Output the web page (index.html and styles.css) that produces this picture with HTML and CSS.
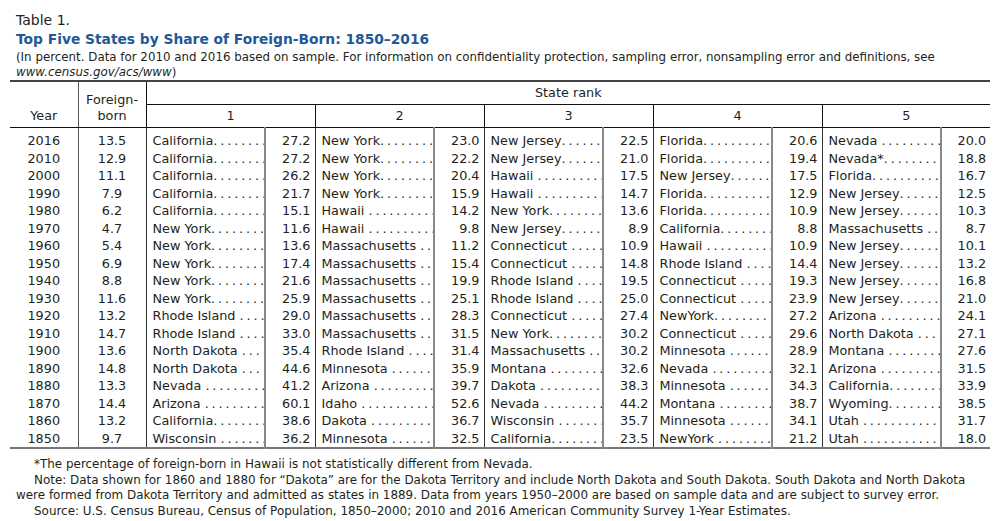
FILE: index.html
```html
<!DOCTYPE html>
<html>
<head>
<meta charset="utf-8">
<link rel="stylesheet" href="styles.css">
</head>
<body>
<div class="page">
  <div class="label">Table 1.</div>
  <h1 class="title">Top Five States by Share of Foreign-Born: 1850–2016</h1>
  <p class="sub">(In percent. Data for 2010 and 2016 based on sample. For information on confidentiality protection, sampling error, nonsampling error and definitions, see<br><i>www.census.gov/acs/www</i>)</p>
  <table class="tbl">
    <colgroup>
      <col class="c-year"><col class="c-fb">
      <col class="c-name"><col class="c-val">
      <col class="c-name"><col class="c-val">
      <col class="c-name"><col class="c-val">
      <col class="c-name"><col class="c-val">
      <col class="c-name"><col class="c-val5">
    </colgroup>
    <thead>
      <tr class="h1">
        <th rowspan="2" class="hy">Year</th>
        <th rowspan="2" class="hf">Foreign-<br>born</th>
        <th colspan="10" class="hr">State rank</th>
      </tr>
      <tr class="h2">
        <th colspan="2">1</th><th colspan="2">2</th><th colspan="2">3</th><th colspan="2">4</th><th colspan="2" class="last">5</th>
      </tr>
    </thead>
    <tbody>
      <tr class="first"><td>2016</td><td>13.5</td><td class="n">California</td><td class="v">27.2</td><td class="n">New York</td><td class="v">23.0</td><td class="n">New Jersey</td><td class="v">22.5</td><td class="n">Florida</td><td class="v">20.6</td><td class="n">Nevada </td><td class="v">20.0</td></tr>
      <tr><td>2010</td><td>12.9</td><td class="n">California</td><td class="v">27.2</td><td class="n">New York</td><td class="v">22.2</td><td class="n">New Jersey</td><td class="v">21.0</td><td class="n">Florida</td><td class="v">19.4</td><td class="n">Nevada*</td><td class="v">18.8</td></tr>
      <tr><td>2000</td><td>11.1</td><td class="n">California</td><td class="v">26.2</td><td class="n">New York</td><td class="v">20.4</td><td class="n">Hawaii </td><td class="v">17.5</td><td class="n">New Jersey</td><td class="v">17.5</td><td class="n">Florida</td><td class="v">16.7</td></tr>
      <tr><td>1990</td><td>7.9</td><td class="n">California</td><td class="v">21.7</td><td class="n">New York</td><td class="v">15.9</td><td class="n">Hawaii </td><td class="v">14.7</td><td class="n">Florida</td><td class="v">12.9</td><td class="n">New Jersey</td><td class="v">12.5</td></tr>
      <tr><td>1980</td><td>6.2</td><td class="n">California</td><td class="v">15.1</td><td class="n">Hawaii </td><td class="v">14.2</td><td class="n">New York</td><td class="v">13.6</td><td class="n">Florida</td><td class="v">10.9</td><td class="n">New Jersey</td><td class="v">10.3</td></tr>
      <tr><td>1970</td><td>4.7</td><td class="n">New York</td><td class="v">11.6</td><td class="n">Hawaii </td><td class="v">9.8</td><td class="n">New Jersey</td><td class="v">8.9</td><td class="n">California</td><td class="v">8.8</td><td class="n">Massachusetts </td><td class="v">8.7</td></tr>
      <tr><td>1960</td><td>5.4</td><td class="n">New York</td><td class="v">13.6</td><td class="n">Massachusetts </td><td class="v">11.2</td><td class="n">Connecticut </td><td class="v">10.9</td><td class="n">Hawaii </td><td class="v">10.9</td><td class="n">New Jersey</td><td class="v">10.1</td></tr>
      <tr><td>1950</td><td>6.9</td><td class="n">New York</td><td class="v">17.4</td><td class="n">Massachusetts </td><td class="v">15.4</td><td class="n">Connecticut </td><td class="v">14.8</td><td class="n">Rhode Island </td><td class="v">14.4</td><td class="n">New Jersey</td><td class="v">13.2</td></tr>
      <tr><td>1940</td><td>8.8</td><td class="n">New York</td><td class="v">21.6</td><td class="n">Massachusetts </td><td class="v">19.9</td><td class="n">Rhode Island </td><td class="v">19.5</td><td class="n">Connecticut </td><td class="v">19.3</td><td class="n">New Jersey</td><td class="v">16.8</td></tr>
      <tr><td>1930</td><td>11.6</td><td class="n">New York</td><td class="v">25.9</td><td class="n">Massachusetts </td><td class="v">25.1</td><td class="n">Rhode Island </td><td class="v">25.0</td><td class="n">Connecticut </td><td class="v">23.9</td><td class="n">New Jersey</td><td class="v">21.0</td></tr>
      <tr><td>1920</td><td>13.2</td><td class="n">Rhode Island </td><td class="v">29.0</td><td class="n">Massachusetts </td><td class="v">28.3</td><td class="n">Connecticut </td><td class="v">27.4</td><td class="n">NewYork</td><td class="v">27.2</td><td class="n">Arizona </td><td class="v">24.1</td></tr>
      <tr><td>1910</td><td>14.7</td><td class="n">Rhode Island </td><td class="v">33.0</td><td class="n">Massachusetts </td><td class="v">31.5</td><td class="n">New York</td><td class="v">30.2</td><td class="n">Connecticut </td><td class="v">29.6</td><td class="n">North Dakota </td><td class="v">27.1</td></tr>
      <tr><td>1900</td><td>13.6</td><td class="n">North Dakota </td><td class="v">35.4</td><td class="n">Rhode Island </td><td class="v">31.4</td><td class="n">Massachusetts </td><td class="v">30.2</td><td class="n">Minnesota </td><td class="v">28.9</td><td class="n">Montana </td><td class="v">27.6</td></tr>
      <tr><td>1890</td><td>14.8</td><td class="n">North Dakota </td><td class="v">44.6</td><td class="n">Minnesota </td><td class="v">35.9</td><td class="n">Montana </td><td class="v">32.6</td><td class="n">Nevada </td><td class="v">32.1</td><td class="n">Arizona </td><td class="v">31.5</td></tr>
      <tr><td>1880</td><td>13.3</td><td class="n">Nevada </td><td class="v">41.2</td><td class="n">Arizona </td><td class="v">39.7</td><td class="n">Dakota </td><td class="v">38.3</td><td class="n">Minnesota </td><td class="v">34.3</td><td class="n">California</td><td class="v">33.9</td></tr>
      <tr><td>1870</td><td>14.4</td><td class="n">Arizona </td><td class="v">60.1</td><td class="n">Idaho </td><td class="v">52.6</td><td class="n">Nevada </td><td class="v">44.2</td><td class="n">Montana </td><td class="v">38.7</td><td class="n">Wyoming</td><td class="v">38.5</td></tr>
      <tr><td>1860</td><td>13.2</td><td class="n">California</td><td class="v">38.6</td><td class="n">Dakota </td><td class="v">36.7</td><td class="n">Wisconsin </td><td class="v">35.7</td><td class="n">Minnesota </td><td class="v">34.1</td><td class="n">Utah </td><td class="v">31.7</td></tr>
      <tr class="lastrow"><td>1850</td><td>9.7</td><td class="n">Wisconsin </td><td class="v">36.2</td><td class="n">Minnesota </td><td class="v">32.5</td><td class="n">California</td><td class="v">23.5</td><td class="n">NewYork </td><td class="v">21.2</td><td class="n">Utah </td><td class="v">18.0</td></tr>
    </tbody>
  </table>
  <div class="notes">
    <p class="ind">*The percentage of foreign-born in Hawaii is not statistically different from Nevada.</p>
    <p class="ind">Note: Data shown for 1860 and 1880 for “Dakota” are for the Dakota Territory and include North Dakota and South Dakota. South Dakota and North Dakota were formed from Dakota Territory and admitted as states in 1889. Data from years 1950–2000 are based on sample data and are subject to survey error.</p>
    <p class="ind">Source: U.S. Census Bureau, Census of Population, 1850–2000; 2010 and 2016 American Community Survey 1-Year Estimates.</p>
  </div>
</div>
</body>
</html>
```

FILE: styles.css
```css
html, body {
  margin: 0;
  padding: 0;
  background: #ffffff;
}
body {
  font-family: "DejaVu Sans", "Liberation Sans", sans-serif;
  color: #231f20;
}
.page {
  width: 1000px;
  height: 521px;
  padding: 11px 10px 0 10px;
  box-sizing: border-box;
  overflow: hidden;
}
.label {
  font-size: 14px;
  line-height: 18px;
  padding-left: 6px;
}
.title {
  margin: 0;
  font-size: 13.8px;
  line-height: 20px;
  font-weight: bold;
  color: #1f5a96;
  padding-left: 6px;
}
.sub {
  margin: 1px 0 0 0;
  font-size: 11.85px;
  line-height: 15px;
  padding-left: 6px;
  padding-bottom: 0;
}
.sub i {
  font-style: oblique;
}
.tbl {
  width: 980px;
  border-collapse: collapse;
  table-layout: fixed;
  font-size: 12.8px;
  border-top: 2px solid #444;
  border-bottom: 2px solid #777;
}
.c-year { width: 68px; }
.c-fb { width: 68px; }
.c-name { width: 119px; }
.c-val { width: 50px; }
.c-val5 { width: 49px; }
.tbl th {
  font-weight: normal;
  padding: 0;
  text-align: center;
}
.h1 th {
  height: 22px;
  line-height: 16px;
}
.h2 th {
  height: 22px;
  line-height: 22px;
  border-top: 1px solid #111;
  border-left: 1px solid #111;
  border-bottom: 1px solid #111;
}
.hy, .hf {
  vertical-align: bottom;
  border-bottom: 1px solid #111;
  padding-bottom: 3px !important;
}
.hy {
  border-right: 1px solid #555;
}
.hf {
  border-right: 1px solid #111;
}
.hr {
  vertical-align: middle;
}
.tbl td {
  padding: 0;
  height: 17.5px;
  line-height: 17.5px;
  white-space: nowrap;
  overflow: hidden;
  text-align: center;
}
.tbl tr.first td {
  padding-top: 4px;
}
.tbl td:nth-child(1) {
  border-right: 1px solid #555;
}
.tbl td:nth-child(2) {
  border-right: 1px solid #333;
}
.tbl td.n {
  text-align: left;
  padding-left: 6px;
  padding-right: 1px;
  text-overflow: clip;
  border-right: 2px solid #888;
}
.tbl td.n::after {
  content: "..............................";
  letter-spacing: 2.9px;
}
.tbl td.v {
  text-align: right;
  padding-right: 4px;
  border-right: 1px solid #333;
}
.tbl td.v:last-child {
  border-right: none;
}
.notes {
  padding: 8px 0 0 6px;
  font-size: 11.95px;
  line-height: 15.5px;
}
.notes p {
  margin: 0;
}
.notes .ind {
  text-indent: 18px;
}
```
